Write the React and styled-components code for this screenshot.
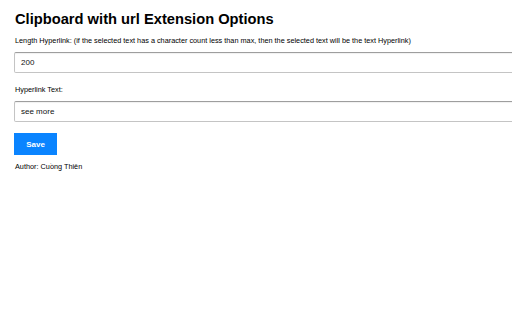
import React from "react";
import styled, { createGlobalStyle } from "styled-components";

const GlobalStyle = createGlobalStyle`
  html, body {
    margin: 0;
    padding: 0;
    background: #ffffff;
    overflow: hidden;
  }
  body {
    font-family: "Liberation Sans", Arial, sans-serif;
    color: #000;
  }
`;

const Page = styled.div`
  width: 512px;
  height: 320px;
  padding: 11px 0 0 14px;
  box-sizing: border-box;
  display: flex;
  flex-direction: column;
`;

const Title = styled.h2`
  margin: 0 0 8px 1px;
  font-size: 14.7px;
  font-weight: 700;
  line-height: 17px;
`;

const Field = styled.div`
  display: flex;
  flex-direction: column;
  margin-bottom: ${({ gap }) => gap}px;
`;

const Label = styled.label`
  font-size: 7.3px;
  line-height: 9px;
  margin: 0 0 7px 1px;
`;

const Input = styled.input`
  width: 520px;
  height: 21px;
  box-sizing: border-box;
  border: 1px solid #c4c4c4;
  border-top-color: #9e9e9e;
  border-radius: 2px;
  padding: 0 6px;
  font-family: "Liberation Sans", Arial, sans-serif;
  font-size: 8px;
  color: #111;
  outline: none;
  box-shadow: inset 0 1px 1px rgba(0, 0, 0, 0.06);
`;

const Button = styled.button`
  width: 43px;
  height: 22px;
  margin: 0 0 7px 0;
  border: none;
  background: #0a84ff;
  color: #fff;
  font-family: "Liberation Sans", Arial, sans-serif;
  font-size: 8px;
  font-weight: 700;
  cursor: pointer;
`;

const Author = styled.div`
  font-size: 7.3px;
  line-height: 9px;
  margin-left: 1px;
`;

export default function App() {
  return (
    <>
      <GlobalStyle />
      <Page>
        <Title>Clipboard with url Extension Options</Title>
        <Field gap={12}>
          <Label>
            Length Hyperlink: (if the selected text has a character count less
            than max, then the selected text will be the text Hyperlink)
          </Label>
          <Input type="text" defaultValue="200" />
        </Field>
        <Field gap={11}>
          <Label>Hyperlink Text:</Label>
          <Input type="text" defaultValue="see more" />
        </Field>
        <Button>Save</Button>
        <Author>Author: Cuồng Thiên</Author>
      </Page>
    </>
  );
}
